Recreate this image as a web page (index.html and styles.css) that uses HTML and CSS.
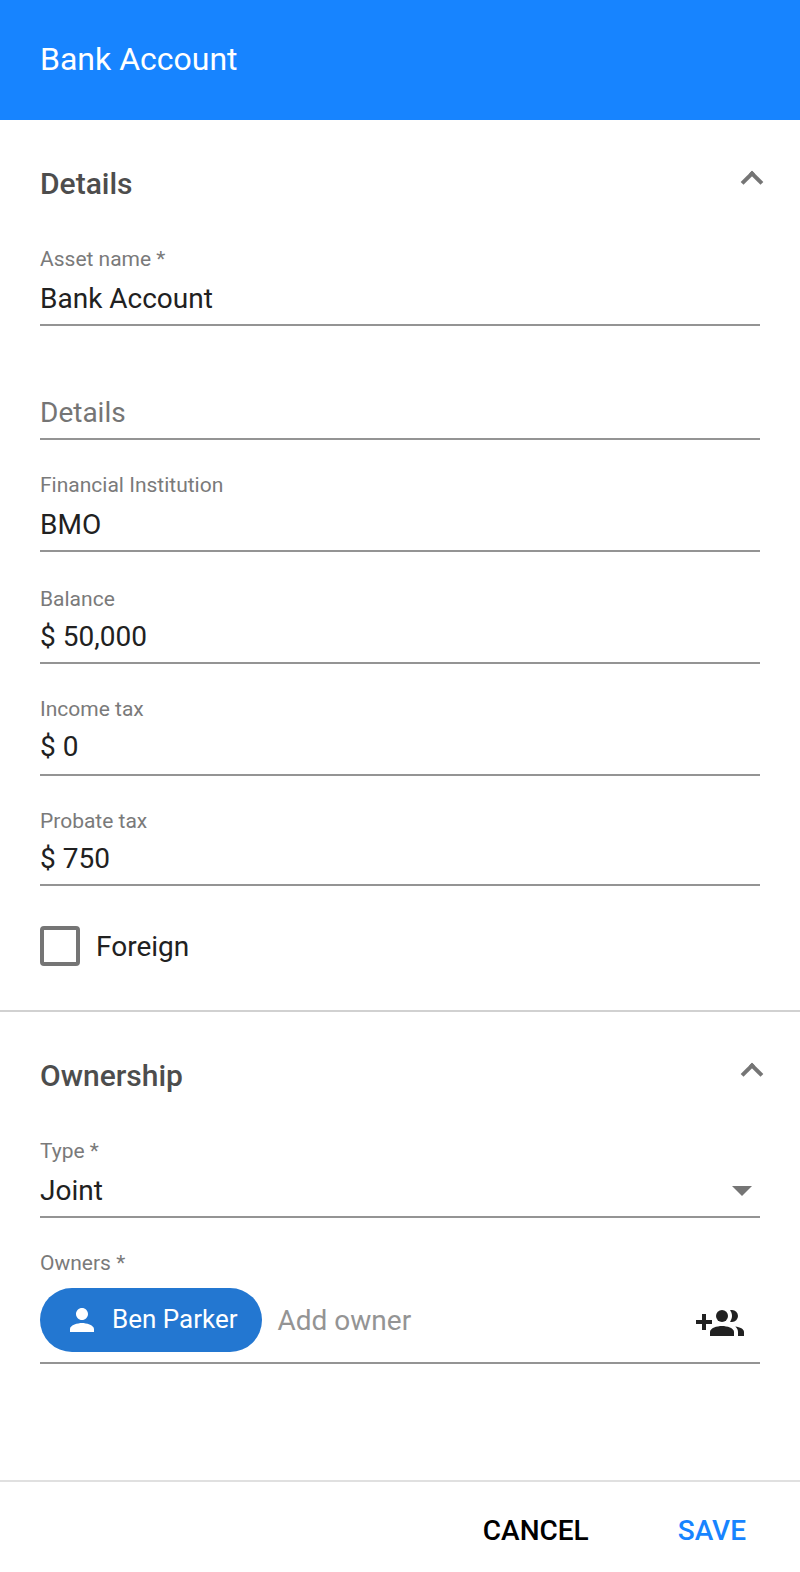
FILE: index.html
```html
<!DOCTYPE html>
<html lang="en">

<head>
    <meta charset="UTF-8">
    <meta name="viewport" content="width=device-width, initial-scale=1.0">
    <title>Bank Account</title>
    <link rel="stylesheet" href="styles.css">
</head>

<body>
<div class="dialog">
    <header class="toolbar">
        <h1>Bank Account</h1>
    </header>

    <section class="panel">
        <div class="panel-head">
            <h2>Details</h2>
            <span class="chevron"></span>
        </div>
        <div class="field">
            <div class="label">Asset name *</div>
            <div class="value">Bank Account</div>
        </div>
        <div class="field empty">
            <div class="value">Details</div>
        </div>
        <div class="field">
            <div class="label">Financial Institution</div>
            <div class="value">BMO</div>
        </div>
        <div class="field money balance">
            <div class="label">Balance</div>
            <div class="value">$ 50,000</div>
        </div>
        <div class="field money income">
            <div class="label">Income tax</div>
            <div class="value">$ 0</div>
        </div>
        <div class="field money">
            <div class="label">Probate tax</div>
            <div class="value">$ 750</div>
        </div>
        <div class="check">
            <span class="box"></span>
            <span class="check-text">Foreign</span>
        </div>
    </section>

    <section class="panel">
        <div class="panel-head">
            <h2>Ownership</h2>
            <span class="chevron"></span>
        </div>
        <div class="field">
            <div class="label">Type *</div>
            <div class="value select">Joint <span class="arrow"></span></div>
        </div>
        <div class="field owners">
            <div class="label">Owners *</div>
            <div class="chips">
                <div class="chip">
                    <svg width="36" height="36" viewBox="0 0 24 24"><path fill="#fff" d="M12 12c2.21 0 4-1.79 4-4s-1.79-4-4-4-4 1.79-4 4 1.79 4 4 4zm0 2c-2.67 0-8 1.34-8 4v2h16v-2c0-2.66-5.33-4-8-4z"/></svg>
                    <span>Ben Parker</span>
                </div>
                <span class="placeholder">Add owner</span>
                <svg class="add" width="48" height="26" viewBox="0 0 48 26" fill="#212121">
                    <path d="M6 4h4v6h6v4h-6v6H6v-6H0v-4h6z"/>
                    <circle cx="26" cy="6" r="6"/>
                    <path d="M14 26v-4c0-4 7-6 12-6s12 2 12 6v4z"/>
                    <path d="M34 .3C35.2 1.8 36 3.8 36 6s-.8 4.2-2 5.7c.7.2 1.3.3 2 .3a6 6 0 0 0 0-12c-.7 0-1.3.1-2 .3z"/>
                    <path d="M39.3 16.6C41 18.2 42 20 42 22v4h6v-4c0-2.9-4-4.8-8.7-5.4z"/>
                </svg>
            </div>
        </div>
    </section>

    <footer class="actions">
        <button type="button">CANCEL</button>
        <button type="button" class="primary">SAVE</button>
    </footer>
</div>
</body>

</html>
```
FILE: styles.css
```css
* {
    box-sizing: border-box;
}

body {
    margin: 0;
    background: #fff;
    color: #212121;
    font-family: Roboto, "Liberation Sans", sans-serif;
    font-size: 28px;
    line-height: 33px;
}

.dialog {
    display: flex;
    flex-direction: column;
    height: 1572px;
}

.toolbar {
    height: 120px;
    padding: 40px;
    background: #1784ff;
    color: #fff;
}

h1 {
    margin: 0;
    font-size: 32px;
    font-weight: 400;
    line-height: 38px;
}

.panel {
    padding: 46px 40px 44px;
}

.panel + .panel {
    border-top: 2px solid #d1d1d1;
}

.panel-head {
    display: flex;
    justify-content: space-between;
    margin-bottom: 46px;
}

h2 {
    margin: 0;
    color: #4d4d4d;
    font-size: 30px;
    font-weight: 500;
    line-height: 35px;
}

.chevron {
    width: 16px;
    height: 16px;
    margin-top: 8px;
    border: solid #757575;
    border-width: 4px 0 0 4px;
    transform: rotate(45deg);
}

.field {
    margin-top: 33px;
    padding-bottom: 9px;
    border-bottom: 2px solid #949494;
}

.panel-head + .field {
    margin-top: 0;
}

.label {
    margin-bottom: 11px;
    color: #7a7a7a;
    font-size: 21px;
    line-height: 24px;
}

.empty {
    margin-top: 70px;
    color: #757575;
}

.money .label {
    margin-bottom: 9px;
}

.balance {
    margin-top: 35px;
}

.income {
    padding-bottom: 11px;
}

.check {
    display: flex;
    align-items: center;
    gap: 16px;
    height: 40px;
    margin-top: 40px;
}

.box {
    width: 40px;
    height: 40px;
    border: 4px solid #757575;
    border-radius: 4px;
}

.select {
    display: flex;
    justify-content: space-between;
    padding-right: 8px;
}

.arrow {
    height: 10px;
    margin-top: 12px;
    border: 10px solid transparent;
    border-top-color: #757575;
    border-bottom: 0;
}

.owners {
    padding-bottom: 10px;
}

.owners .label {
    margin-bottom: 13px;
}

.chips {
    display: flex;
    align-items: center;
    gap: 16px;
    padding-right: 16px;
}

.chip {
    display: flex;
    align-items: center;
    gap: 12px;
    height: 64px;
    padding: 0 24px;
    border-radius: 32px;
    background: #2377d1;
    color: #fff;
    font-size: 26px;
    line-height: 30px;
}

.chip span {
    margin-top: -2px;
}

.placeholder {
    color: #949494;
}

.add {
    margin: 6px 0 0 auto;
}

.actions {
    display: flex;
    justify-content: flex-end;
    gap: 89px;
    height: 92px;
    margin-top: auto;
    padding: 32px 54px 0;
    border-top: 2px solid #e0e0e0;
}

button {
    height: 33px;
    padding: 0;
    border: none;
    background: none;
    color: #000;
    font: 500 28px/33px Roboto, "Liberation Sans", sans-serif;
    cursor: pointer;
}

.primary {
    color: #1784ff;
}
```
